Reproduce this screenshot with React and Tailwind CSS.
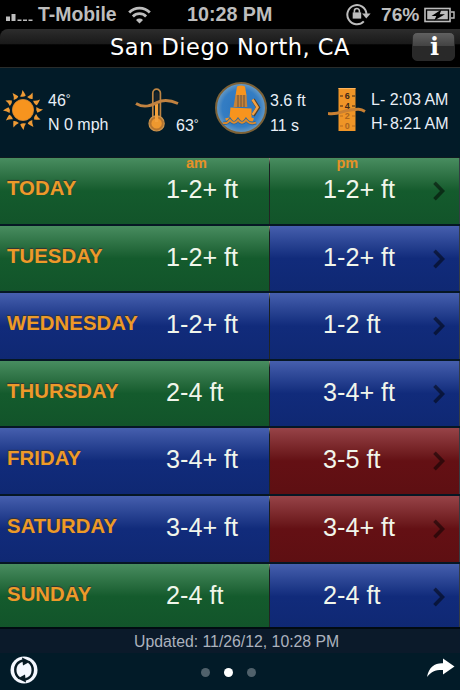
const FORECAST = [
  { day: 'TODAY', am: '1-2+ ft', amTone: 'green', pm: '1-2+ ft', pmTone: 'green' },
  { day: 'TUESDAY', am: '1-2+ ft', amTone: 'green', pm: '1-2+ ft', pmTone: 'blue' },
  { day: 'WEDNESDAY', am: '1-2+ ft', amTone: 'blue', pm: '1-2 ft', pmTone: 'blue' },
  { day: 'THURSDAY', am: '2-4 ft', amTone: 'green', pm: '3-4+ ft', pmTone: 'blue' },
  { day: 'FRIDAY', am: '3-4+ ft', amTone: 'blue', pm: '3-5 ft', pmTone: 'red' },
  { day: 'SATURDAY', am: '3-4+ ft', amTone: 'blue', pm: '3-4+ ft', pmTone: 'red' },
  { day: 'SUNDAY', am: '2-4 ft', amTone: 'green', pm: '2-4 ft', pmTone: 'blue' },
];

const TONES = {
  green: 'bg-linear-to-b from-[#488d60] via-[#145b2d] via-50% to-[#12542a]',
  blue: 'bg-linear-to-b from-[#465fae] via-[#112b7b] via-50% to-[#0f2873]',
  red: 'bg-linear-to-b from-[#974348] via-[#641014] via-50% to-[#5e0f12]',
};

function StatusBar() {
  return (
    <div className="flex h-[29px] items-center pl-[5px] text-[19.7px] leading-[29px] font-bold text-[#bdbdbd]">
      <svg width="29" height="10" viewBox="0 0 29 10" className="mt-[4px] shrink-0" fill="#bdbdbd">
        <rect x="1" y="4.5" width="4" height="4.5" />
        <rect x="6.5" y="2" width="4" height="7" />
        <rect x="12.5" y="7.5" width="4" height="1.5" />
        <rect x="18" y="7.5" width="4" height="1.5" />
        <rect x="23.5" y="7.5" width="4" height="1.5" />
      </svg>
      <span className="ml-[4px] w-[90px] text-[19.4px]">T-Mobile</span>
      <svg width="23" height="18" viewBox="0 0 23 18" className="shrink-0" fill="none" stroke="#bdbdbd" strokeWidth="2.8">
        <path d="M1.2 6.4a14.4 14.4 0 0 1 20.6 0" />
        <path d="M4.9 10.5a9.2 9.2 0 0 1 13.2 0" />
        <path d="M8 14a4.9 4.9 0 0 1 7 0l-3.5 3.5z" fill="#bdbdbd" stroke="none" />
      </svg>
      <span className="ml-9 w-[159px] whitespace-nowrap">10:28 PM</span>
      <svg width="25" height="23" viewBox="0 0 25 23" className="shrink-0" fill="none" stroke="#bdbdbd" strokeWidth="2">
        <path d="M17.8 18.4A9.6 9.6 0 1 1 20.5 10.8" />
        <path d="M16 10.5h8.6l-4.3 5z" fill="#bdbdbd" stroke="none" />
        <rect x="6.7" y="9.4" width="8.5" height="6.2" fill="#bdbdbd" stroke="none" />
        <path d="M8.4 9.8V8a2.5 2.5 0 0 1 5 0v1.8" strokeWidth="1.6" />
      </svg>
      <span className="ml-[10px] w-[43px] text-[19.2px]">76%</span>
      <svg width="31" height="16" viewBox="0 0 31 16" className="shrink-0">
        <rect x="1" y="1.5" width="25" height="13" fill="none" stroke="#bdbdbd" strokeWidth="1.6" />
        <path d="M27 5h3v6h-3" fill="none" stroke="#bdbdbd" strokeWidth="1.4" />
        <rect x="3.2" y="3.7" width="20.6" height="8.6" fill="#bdbdbd" />
        <path d="M17.5 2.5L7.5 9h4.8l-2 4.5L21 7.2h-5.3z" fill="#000" />
      </svg>
    </div>
  );
}

function TitleBar() {
  return (
    <div className="flex h-[39px] items-center rounded-tl-lg border-b border-[#292c2b] bg-linear-to-b from-[#2d2d2d] from-0% via-[#191919] via-40% to-black to-42% pl-[110px]">
      <h1 className="mt-[-3px] w-[302px] shrink-0 whitespace-nowrap font-['DejaVu_Sans',sans-serif] text-[22.5px] leading-[30px] tracking-[0.5px] text-white">
        San Diego North, CA
      </h1>
      <button className="-mt-1 flex h-[29px] w-[43px] items-center justify-center rounded-[5px] border border-[#292929] bg-linear-to-b from-[#606060] from-0% via-[#434343] via-48% to-[#292929] to-50% pt-[1px] pl-[2px] font-['DejaVu_Serif',serif] text-[24px] leading-none font-bold text-white">
        i
      </button>
    </div>
  );
}

function SunIcon() {
  const rays = Array.from({ length: 12 }, (_, i) => i * 30);
  return (
    <svg width="40" height="42" viewBox="0 0 40 42" className="shrink-0">
      {rays.map((angle) => (
        <path key={angle} d="M17 7.6Q19 5.2 19.5 1Q21.8 4.3 22.8 6.6Q21 8.4 17 7.6Z" fill="#ee9a35" transform={`rotate(${angle} 20 21)`} />
      ))}
      <circle cx="20" cy="21" r="10.6" fill="#f7941e" stroke="#d98b36" strokeWidth=".8" />
    </svg>
  );
}

function WaterTempIcon() {
  return (
    <svg width="44" height="44" viewBox="0 0 44 44" className="shrink-0" fill="none">
      <path d="M17.8 31V5a3.8 3.8 0 0 1 7.6 0v26" stroke="#bd8443" strokeWidth="1.7" />
      <circle cx="21.6" cy="35.4" r="7.6" fill="#b5742e" stroke="#ca934d" strokeWidth="1.2" />
      <circle cx="21.6" cy="35.4" r="5.2" fill="#ee982f" />
      <path d="M21.6 34V16" stroke="#f3a13c" strokeWidth="3.2" />
      <path d="M19.5 14V6a2.1 2.1 0 0 1 4.2 0v8" fill="#18232a" />
      <path d="M1 15.5C9 20.5 16 17.8 22 14.7S35 12 43 15.5" stroke="#c18240" strokeWidth="3" />
    </svg>
  );
}

function BuoyIcon() {
  return (
    <svg width="54" height="54" viewBox="0 0 54 54" className="shrink-0">
      <defs>
        <radialGradient id="sea">
          <stop offset="0" stopColor="#2873bd" />
          <stop offset=".75" stopColor="#347dc3" />
          <stop offset="1" stopColor="#6b9cc4" />
        </radialGradient>
      </defs>
      <circle cx="27" cy="27" r="25" fill="url(#sea)" stroke="#7d6237" strokeWidth="2" />
      <path d="M23 5.5q4-2 8 0l1.5 9H21.5z" fill="#f7941e" />
      <path d="M21.5 14h11l.8 12H19.5z" fill="#c78338" />
      <path d="M24 14v12M27 14v12M30 14v12" stroke="#68523c" strokeWidth="1" />
      <path d="M16.5 26.5l21 1v9l2.5 1-2 4.5H14l-3-4.5 4.5-1z" fill="#f7941e" />
      <path d="M9 42q4.5 1 7-3 4 5.5 8 0 4 5.5 8 0 4 5 10 2.5" fill="none" stroke="#2f689c" strokeWidth="3.6" />
      <path d="M9 42q4.5 1 7-3 4 5.5 8 0 4 5.5 8 0 4 5 10 2.5" fill="none" stroke="#e18b29" strokeWidth="1.8" />
      <path d="M39 18.5l5 8-5 8" fill="none" stroke="#54412b" strokeWidth="4" />
      <path d="M38.5 18.5l5 7.7-5 7.7" fill="none" stroke="#f2a044" strokeWidth="2.5" />
    </svg>
  );
}

function TideIcon() {
  return (
    <svg width="38" height="45" viewBox="0 0 38 45" className="shrink-0">
      <rect x="10.5" y="1" width="17" height="43" fill="#ef9527" />
      <path d="M10.5 1.5h17" stroke="#ffb45b" />
      <path d="M12 9h3M24 9h3M12 19h3M24 19h3" stroke="#382719" strokeWidth="1.2" />
      <path d="M12 29h3M24 29h3M12 39h3M24 39h3" stroke="#b36b21" strokeWidth="1.2" />
      <g fontSize="9" fontWeight="bold" textAnchor="middle">
        <text x="19.3" y="11.5" fill="#382719">6</text>
        <text x="19.3" y="21.5" fill="#382719">4</text>
        <text x="19.3" y="32" fill="#aa6520">2</text>
        <text x="19.3" y="42" fill="#aa6520">0</text>
      </g>
      <path d="M0 26.5C10 28 14 24 21 23.2S31 21 37 24.5" fill="none" stroke="#c98032" strokeWidth="3" />
    </svg>
  );
}

function Degree() {
  return <span className="inline-block -translate-y-[3px] text-[12px] leading-none">°</span>;
}

function Conditions() {
  return (
    <div className="flex h-[89px] items-start bg-[#021b28] pl-[3px] text-[16px] leading-6 whitespace-nowrap text-[#e9eff7]">
      <div className="flex w-[132px] pt-[21px]">
        <SunIcon />
        <div className="ml-[5px]">
          <p className="leading-[24px]">46<Degree /></p>
          <p className="leading-[24px]">N 0 mph</p>
        </div>
      </div>
      <div className="flex w-[79px] pt-[20px]">
        <WaterTempIcon />
        <p className="mt-[26px] -ml-[3px]">63<Degree /></p>
      </div>
      <div className="flex w-[114px] pt-[13px]">
        <BuoyIcon />
        <div className="mt-[8px] ml-[2px]">
          <p className="leading-[24px]">3.6 ft</p>
          <p className="leading-[25px]">11 s</p>
        </div>
      </div>
      <div className="flex pt-[19px]">
        <TideIcon />
        <div className="ml-[5px]">
          <p className="leading-[25px]">L- 2:03 AM</p>
          <p className="leading-[24px]">H-<span className="ml-[2px]">8:21 AM</span></p>
        </div>
      </div>
    </div>
  );
}

function ForecastRow({ row, first }) {
  return (
    <div className="flex h-[67.6px] shrink-0 border-b-2 border-[#061724] text-[25.2px] leading-[63px] whitespace-nowrap text-[#f1f6eb]">
      <div className={`relative flex w-[269px] ${TONES[row.amTone]}`}>
        <span className="w-[166px] pl-[7px] text-[20.3px] leading-[61px] font-bold tracking-[0.1px] text-[#ed9a29] [text-shadow:0_-1px_1px_#333]">
          {row.day}
        </span>
        <span>{row.am}</span>
        {first && <span className="absolute top-[-3px] left-[186px] text-[14.5px] leading-4 font-bold text-[#e69127]">am</span>}
      </div>
      <div className="w-px bg-linear-to-b from-[#9b9483] via-[#171e20] via-10% to-[#242624]" />
      <div className={`relative flex w-[188.5px] pl-[53px] ${TONES[row.pmTone]}`}>
        <span className="w-[110px]">{row.pm}</span>
        <svg width="12" height="20" viewBox="0 0 12 20" className="mt-[23px] shrink-0">
          <path d="M1.5 1.8l8 8.2-8 8.2" fill="none" stroke="#000" strokeOpacity=".5" strokeWidth="3.6" />
        </svg>
        {first && <span className="absolute top-[-3px] left-[66.5px] text-[14.5px] leading-4 font-bold text-[#e69127]">pm</span>}
      </div>
      <div className="flex-1 bg-[#353c43]" />
    </div>
  );
}

function Footer() {
  return (
    <footer className="relative h-[63px] border-t-2 border-[#010b12] bg-[#021b28]">
      <p className="h-[24px] bg-[#0b1a2a] pt-[1px] pl-[134px] text-[15.8px] leading-[24px] text-[#abb2be]">
        Updated: 11/26/12, 10:28 PM
      </p>
      <div className="flex h-[34px] items-center pl-[10px]">
        <svg width="28" height="28" viewBox="0 0 28 28" className="shrink-0">
          <circle cx="14" cy="14" r="13.5" fill="#f5f8ff" />
          <path d="M9.4 22.2C3.6 18 4 8.8 10 5.6l3-1.2" fill="none" stroke="#071923" strokeWidth="2.4" />
          <path d="M12 1.5l8.3 4.1-7.3 4z" fill="#071923" />
          <path d="M18.6 5.8C24.4 10 24 19.2 18 22.4l-3 1.2" fill="none" stroke="#071923" strokeWidth="2.4" />
          <path d="M16 26.5l-8.3-4.1 7.3-4z" fill="#071923" />
        </svg>
        <div className="ml-[163px] flex gap-[14px] pt-[5px]">
          <span className="size-[9px] rounded-full bg-[#50616b]" />
          <span className="size-[9px] rounded-full bg-white" />
          <span className="size-[9px] rounded-full bg-[#50616b]" />
        </div>
        <svg width="30" height="20" viewBox="0 0 30 20" className="mt-[-4px] ml-[170px] shrink-0">
          <path d="M1 19C3 8.5 9 4.8 17 5.2V.5l11.5 8.1-11.5 8V12C9.4 11.8 5.3 13.5 1 19z" fill="#fff" />
        </svg>
      </div>
    </footer>
  );
}

export default function App() {
  return (
    <div className="h-[690px] w-[460px] overflow-hidden bg-black font-['Liberation_Sans',Arial,sans-serif]">
      <StatusBar />
      <TitleBar />
      <Conditions />
      <main className="flex h-[470px] flex-col border-t border-[#101b20] bg-[#061724]">
        {FORECAST.map((row, i) => (
          <ForecastRow key={row.day} row={row} first={i === 0} />
        ))}
      </main>
      <Footer />
    </div>
  );
}
